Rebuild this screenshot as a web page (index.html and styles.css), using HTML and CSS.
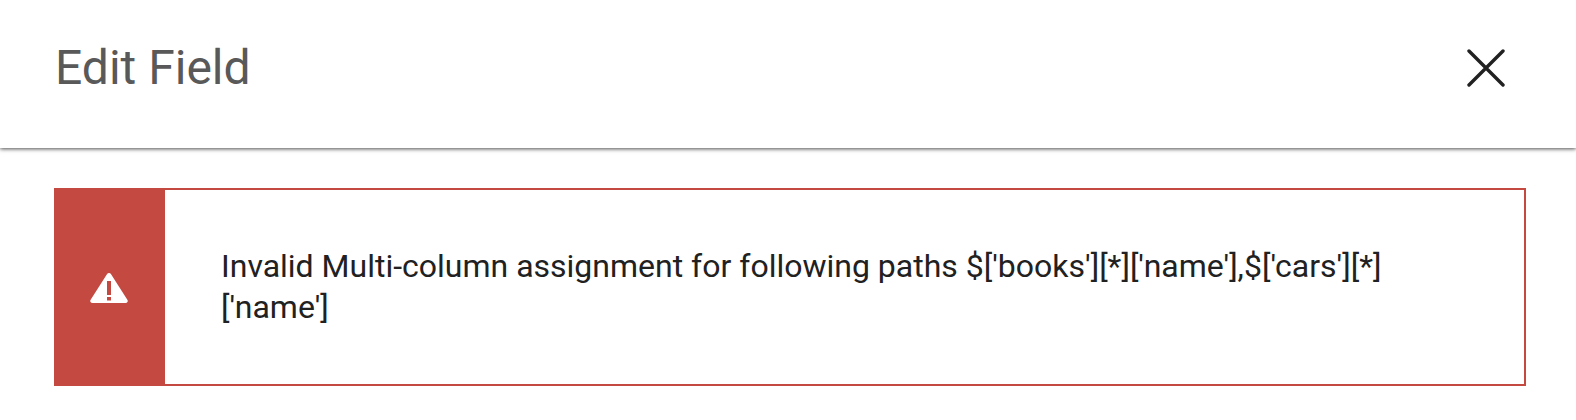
FILE: index.html
```html
<!DOCTYPE html>
<html lang="en">
<head>
    <meta charset="UTF-8">
    <title>Edit Field</title>
    <link rel="stylesheet" href="styles.css">
</head>
<body>
    <div class="dialog-header">
        <h1>Edit Field</h1>
        <button class="close-btn" aria-label="Close">
            <svg width="38" height="38" viewBox="0 0 38 38">
                <path d="M2 2L36 36M36 2L2 36" stroke="#212121" stroke-width="3.4" stroke-linecap="round" fill="none"/>
            </svg>
        </button>
    </div>
    <div class="dialog-body">
        <div class="alert">
            <div class="alert-icon">
                <svg width="38" height="30" viewBox="0 0 38 30">
                    <path fill-rule="evenodd" fill="#fff" d="M19 0c.8 0 1.500.4 1.900 1.100l16.600 26c.7 1.200-.2 2.900-1.600 2.900H2.100c-1.400 0-2.300-1.700-1.600-2.900L17.100 1.100C17.500.4 18.200 0 19 0zM17 8v14h4V8zM17 24v3.500h4V24z"/>
                </svg>
            </div>
            <div class="alert-text">Invalid Multi-column assignment for following paths $['books'][*]['name'],$['cars'][*]['name']</div>
        </div>
    </div>
</body>
</html>
```

FILE: styles.css
```css
html, body {
    margin: 0;
    padding: 0;
    height: 420px;
    overflow: hidden;
    background-color: #fff;
    font-family: Roboto, "Liberation Sans", sans-serif;
}
.dialog-header {
    height: 148px;
    display: flex;
    align-items: center;
    justify-content: space-between;
    padding: 0 71px 12px 55px;
    box-sizing: border-box;
    background-color: #fff;
    box-shadow: 0 1px 4px rgba(0,0,0,0.7);
}
h1 {
    margin: 0 0 2px;
    font-size: 48px;
    font-weight: 400;
    color: #595959;
}
.close-btn {
    display: flex;
    padding: 0;
    border: none;
    background: none;
}
.dialog-body {
    padding: 40px 50px 0 54px;
}
.alert {
    display: flex;
    height: 198px;
    box-sizing: border-box;
    border: 2px solid #c44a41;
}
.alert-icon {
    width: 109px;
    box-sizing: border-box;
    padding: 1px 3px 0 0;
    flex-shrink: 0;
    display: flex;
    align-items: center;
    justify-content: center;
    background-color: #c44a41;
}
.alert-text {
    flex: 1;
    align-self: center;
    padding: 0 56px 0 56px;
    font-size: 32px;
    line-height: 41px;
    color: #212121;
    overflow-wrap: anywhere;
}
```
